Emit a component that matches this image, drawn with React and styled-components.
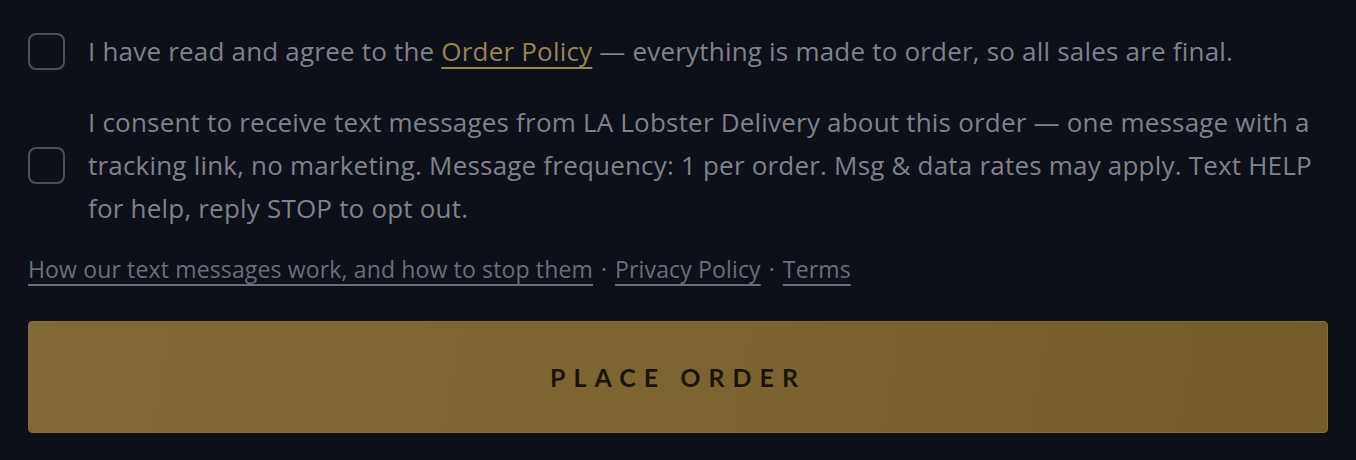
import React, { useState } from 'react';
import styled, { createGlobalStyle } from 'styled-components';

const GlobalStyle = createGlobalStyle`
  html, body {
    margin: 0;
    padding: 0;
    background: #0d1019;
  }
  body {
    font-family: "Open Sans", Lato, sans-serif;
  }
`;

const App = () => {
  const [agreePolicy, setAgreePolicy] = useState(false);
  const [agreeSms, setAgreeSms] = useState(false);

  return (
    <>
      <GlobalStyle />
      <Wrapper>
        <ConsentRow>
          <Checkbox
            type="checkbox"
            checked={agreePolicy}
            onChange={e => setAgreePolicy(e.target.checked)}
          />
          <ConsentText>
            I have read and agree to the <GoldLink href="#">Order Policy</GoldLink> — everything
            is made to order, so all sales are final.
          </ConsentText>
        </ConsentRow>

        <ConsentRow>
          <Checkbox
            type="checkbox"
            checked={agreeSms}
            onChange={e => setAgreeSms(e.target.checked)}
          />
          <ConsentText>
            I consent to receive text messages from LA Lobster Delivery about this order — one
            message with a tracking link, no marketing. Message frequency: 1 per order. Msg &amp;
            data rates may apply. Text HELP for help, reply STOP to opt out.
          </ConsentText>
        </ConsentRow>

        <LinkLine>
          <MutedLink href="#">How our text messages work, and how to stop them</MutedLink>
          <Dot>·</Dot>
          <MutedLink href="#">Privacy Policy</MutedLink>
          <Dot>·</Dot>
          <MutedLink href="#">Terms</MutedLink>
        </LinkLine>

        <OrderButton type="button">Place Order</OrderButton>
      </Wrapper>
    </>
  );
};

const Wrapper = styled.div`
  display: flex;
  flex-direction: column;
  padding: 30px 28px 26px;
`;

const ConsentRow = styled.label`
  display: flex;
  align-items: center;
  gap: 23px;
  margin-bottom: 28px;
  cursor: pointer;
`;

const Checkbox = styled.input`
  appearance: none;
  flex: 0 0 auto;
  width: 37px;
  height: 37px;
  margin: 0;
  border: 2px solid #4a4f5a;
  border-radius: 8px;
  background: transparent;
  cursor: pointer;
  &:checked {
    background: #8a7038;
    border-color: #8a7038;
  }
`;

const ConsentText = styled.span`
  font-size: 26px;
  line-height: 43px;
  color: #7f828b;
  letter-spacing: 0.2px;
`;

const GoldLink = styled.a`
  color: #9a8450;
  text-decoration: underline;
  text-decoration-thickness: 2px;
  text-underline-offset: 6px;
`;

const LinkLine = styled.div`
  display: flex;
  align-items: baseline;
  gap: 8px;
  margin-top: -6px;
  font-size: 23px;
  line-height: 34px;
  color: #6a6e78;
`;

const MutedLink = styled.a`
  color: #6a6e78;
  text-decoration: underline;
  text-decoration-thickness: 2px;
  text-underline-offset: 6px;
  letter-spacing: 0.15px;
`;

const Dot = styled.span`
  color: #6a6e78;
`;

const OrderButton = styled.button`
  margin-top: 35px;
  height: 112px;
  width: 100%;
  border: 1px solid #856c33;
  border-radius: 4px;
  background: linear-gradient(100deg, #806936 0%, #7c6430 55%, #745b29 100%);
  color: #19140a;
  font-family: Lato, sans-serif;
  font-size: 25px;
  font-weight: 700;
  letter-spacing: 0.32em;
  text-transform: uppercase;
  cursor: pointer;
`;

export default App;
